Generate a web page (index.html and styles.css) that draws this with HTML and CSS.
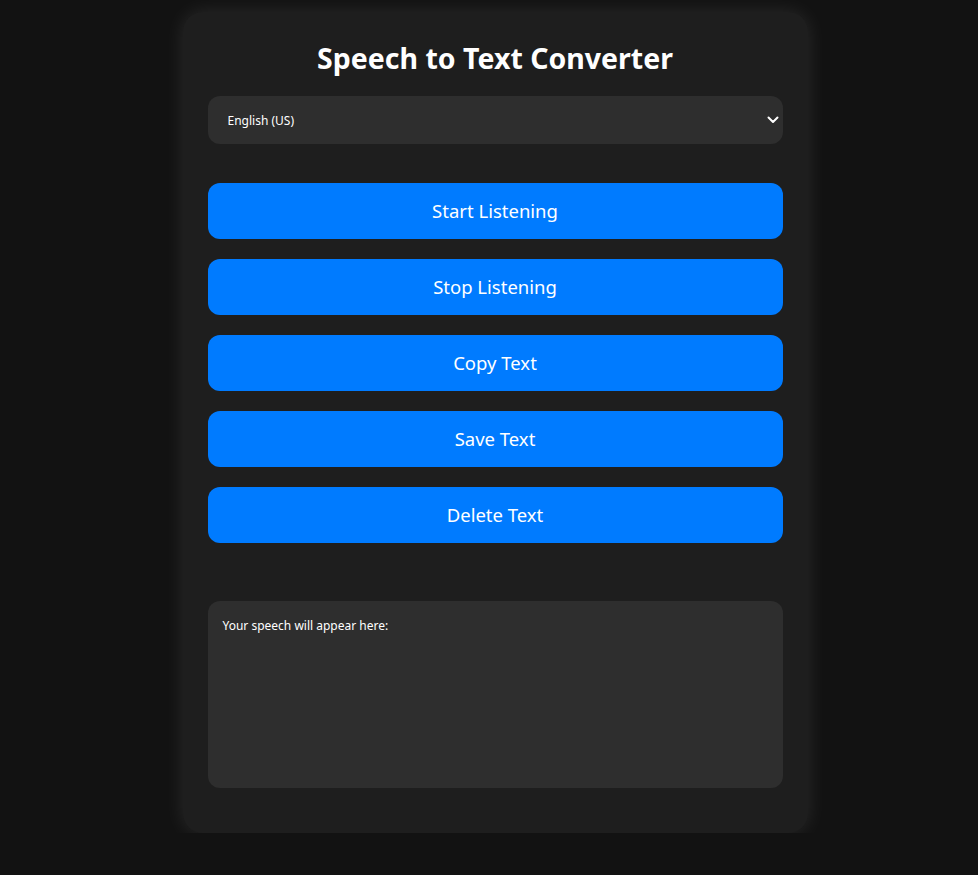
FILE: index.html
```html
<!DOCTYPE html>
<html lang="en">
<head>
<meta charset="utf-8">
<title>Speech to Text Converter</title>
<link rel="stylesheet" href="styles.css">
</head>
<body>
  <main class="card">
    <h1 class="title">Speech to Text Converter</h1>
    <div class="select-wrap">
      <select class="lang">
        <option>English (US)</option>
        <option>English (UK)</option>
        <option>Spanish</option>
        <option>French</option>
      </select>
      <svg class="chev" width="12" height="8" viewBox="0 0 12 8" aria-hidden="true"><path d="M1.5 1.5 L6 6 L10.5 1.5" fill="none" stroke="#fff" stroke-width="2" stroke-linecap="round" stroke-linejoin="round"/></svg>
    </div>
    <div class="buttons">
      <button class="btn">Start Listening</button>
      <button class="btn">Stop Listening</button>
      <button class="btn">Copy Text</button>
      <button class="btn">Save Text</button>
      <button class="btn">Delete Text</button>
    </div>
    <div class="output">Your speech will appear here:</div>
  </main>
</body>
</html>
```
FILE: styles.css
```css
* { box-sizing: border-box; }
html, body { margin: 0; padding: 0; }
body {
  background: #121212;
  font-family: "Noto Sans", "Open Sans", sans-serif;
  color: #fff;
  padding-top: 12px;
  padding-left: 12px;
}
.card {
  width: 625px;
  margin: 0 auto;
  background: #1e1e1e;
  border-radius: 20px;
  padding: 25px 25px 45px;
  box-shadow: 0 0 20px rgba(255, 255, 255, 0.1);
  display: flex;
  flex-direction: column;
}
.title {
  margin: 0 0 17px;
  text-align: center;
  font-size: 28.5px;
  font-weight: 700;
  line-height: 42px;
}
.select-wrap {
  position: relative;
}
.lang {
  appearance: none;
  -webkit-appearance: none;
  width: 100%;
  height: 48px;
  border: none;
  border-radius: 12px;
  background: #2e2e2e;
  color: #fff;
  font-family: inherit;
  font-size: 12px;
  padding: 0 20px;
  outline: none;
}
.chev {
  position: absolute;
  right: 4px;
  top: 20px;
  pointer-events: none;
}
.buttons {
  display: flex;
  flex-direction: column;
  gap: 19.5px;
  margin-top: 38.5px;
}
.btn {
  height: 56.5px;
  border: none;
  border-radius: 12px;
  background: #007bff;
  color: #fff;
  font-family: inherit;
  font-size: 18.5px;
  cursor: pointer;
}
.output {
  margin-top: 58px;
  height: 187px;
  background: #2e2e2e;
  border-radius: 12px;
  padding: 17px 15px;
  font-size: 12px;
  line-height: 16px;
}
```
